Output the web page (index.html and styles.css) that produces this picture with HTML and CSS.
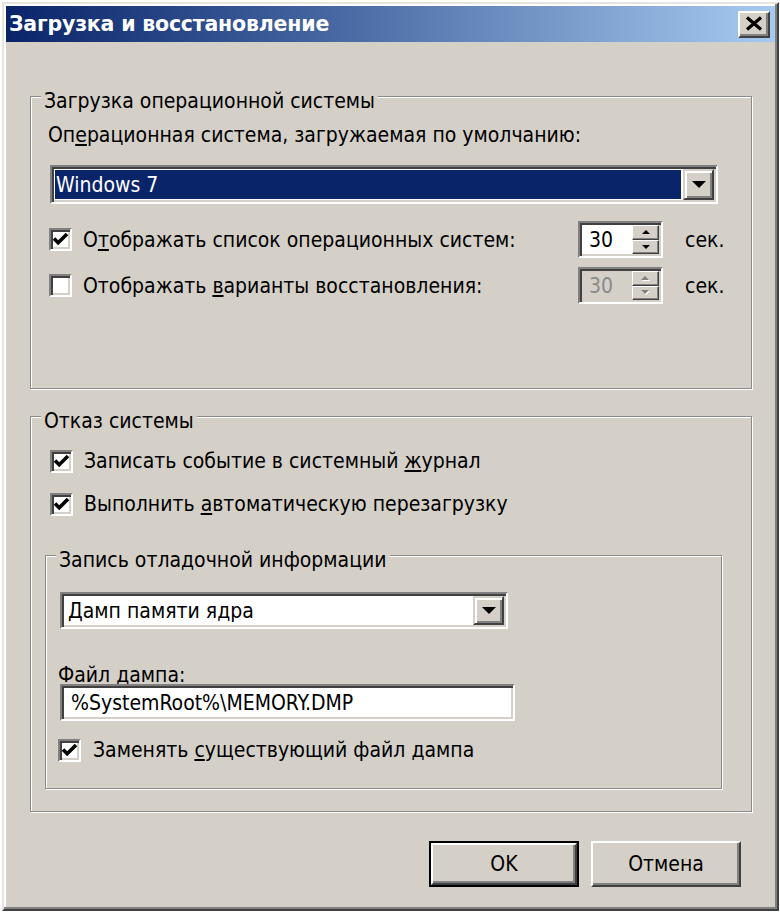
FILE: index.html
```html
<!DOCTYPE html>
<html lang="ru">
<head>
<meta charset="utf-8">
<title>Загрузка и восстановление</title>
<link rel="stylesheet" href="styles.css">
</head>
<body>
<div class="window">
  <div class="titlebar">
    <span class="title">Загрузка и восстановление</span>
    <span class="close"><svg width="18" height="15" viewBox="0 0 18 15"><path d="M2 1.5 L16 13.5 M16 1.5 L2 13.5" stroke="#000" stroke-width="3.2" fill="none"/></svg></span>
  </div>
  <div class="content">
    <div class="group g1">
      <div class="group-title"><span>Загрузка операционной системы</span></div>
      <div class="label l-os">Оп<u>е</u>рационная система, загружаемая по умолчанию:</div>
      <div class="combo combo-os">
        <div class="combo-field"><span class="sel">Windows 7</span></div>
        <span class="drop-btn"><svg width="14" height="7" viewBox="0 0 14 7"><path d="M0 0 H14 L7 7 Z" fill="#000"/></svg></span>
      </div>
      <div class="timer-row r1">
        <span class="check"><svg width="19" height="19" viewBox="0 0 19 19"><path d="M3 8.5 L7.2 12.8 L16 4" stroke="#000" stroke-width="3.6" fill="none"/></svg></span>
        <span class="row-label">О<u>т</u>ображать список операционных систем:</span>
        <div class="spin">
          <span class="spin-value">30</span>
          <span class="spin-btns">
            <span class="spin-btn"><svg width="8" height="4" viewBox="0 0 8 4"><path d="M4 0 L8 4 H0 Z" fill="#000"/></svg></span>
            <span class="spin-btn"><svg width="8" height="4" viewBox="0 0 8 4"><path d="M0 0 H8 L4 4 Z" fill="#000"/></svg></span>
          </span>
        </div>
        <span class="unit">сек.</span>
      </div>
      <div class="timer-row r2">
        <span class="check"></span>
        <span class="row-label">Отображать <u>в</u>арианты восстановления:</span>
        <div class="spin disabled">
          <span class="spin-value">30</span>
          <span class="spin-btns">
            <span class="spin-btn"><svg width="9" height="5" viewBox="0 0 9 5"><path d="M5 1 L9 5 H1 Z" fill="#fff"/><path d="M4 0 L8 4 H0 Z" fill="#808080"/></svg></span>
            <span class="spin-btn"><svg width="9" height="5" viewBox="0 0 9 5"><path d="M1 1 H9 L5 5 Z" fill="#fff"/><path d="M0 0 H8 L4 4 Z" fill="#808080"/></svg></span>
          </span>
        </div>
        <span class="unit">сек.</span>
      </div>
    </div>

    <div class="group g2">
      <div class="group-title"><span>Отказ системы</span></div>
      <div class="check-row c1">
        <span class="check"><svg width="19" height="19" viewBox="0 0 19 19"><path d="M3 8.5 L7.2 12.8 L16 4" stroke="#000" stroke-width="3.6" fill="none"/></svg></span>
        <span class="row-label">Записать событие в системный <u>ж</u>урнал</span>
      </div>
      <div class="check-row c2">
        <span class="check"><svg width="19" height="19" viewBox="0 0 19 19"><path d="M3 8.5 L7.2 12.8 L16 4" stroke="#000" stroke-width="3.6" fill="none"/></svg></span>
        <span class="row-label">Выполнить <u>а</u>втоматическую перезагрузку</span>
      </div>

      <div class="group g3">
        <div class="group-title"><span>Запись отладочной информации</span></div>
        <div class="combo combo-dump">
          <div class="combo-field"><span class="val">Дамп памяти ядра</span></div>
          <span class="drop-btn"><svg width="14" height="7" viewBox="0 0 14 7"><path d="M0 0 H14 L7 7 Z" fill="#000"/></svg></span>
        </div>
        <div class="label l-file">Файл дампа:</div>
        <div class="textbox">%SystemRoot%\MEMORY.DMP</div>
        <div class="check-row c3">
          <span class="check"><svg width="19" height="19" viewBox="0 0 19 19"><path d="M3 8.5 L7.2 12.8 L16 4" stroke="#000" stroke-width="3.6" fill="none"/></svg></span>
          <span class="row-label">Заменять <u>с</u>уществующий файл дампа</span>
        </div>
      </div>
    </div>

    <div class="buttons">
      <span class="btn default"><span class="btn-face">OK</span></span>
      <span class="btn"><span class="btn-face">Отмена</span></span>
    </div>
  </div>
</div>
</body>
</html>
```

FILE: styles.css
```css
* { box-sizing: border-box; }

html, body {
  margin: 0;
  padding: 0;
}

body {
  width: 780px;
  height: 914px;
  overflow: hidden;
  background: #ffffff;
  font-family: "DejaVu Sans Condensed", "DejaVu Sans", sans-serif;
  font-size: 21px;
  line-height: 24px;
  color: #000;
}

u { text-decoration: underline; text-underline-offset: 2px; }

.window {
  margin: 2px 0 0 2px;
  width: 777px;
  height: 909px;
  background: #d4d0c8;
  border: 2px solid;
  border-color: #e6e4e0 #404040 #404040 #e6e4e0;
  box-shadow: inset -2px -2px 0 #808080, inset 2px 2px 0 #ffffff;
  padding: 2px;
  display: flex;
  flex-direction: column;
}

/* ---------- title bar ---------- */
.titlebar {
  height: 36px;
  flex: none;
  background: linear-gradient(to right, #0a246a 0%, #3a5b98 35%, #a6caf0 100%);
  display: flex;
  align-items: center;
  justify-content: space-between;
  padding: 0 5px 0 3px;
}

.title {
  color: #fff;
  font-family: "DejaVu Sans", sans-serif;
  font-weight: bold;
  font-size: 20.5px;
  letter-spacing: -0.2px;
}

.close {
  width: 32px;
  height: 27px;
  background: #d4d0c8;
  border: 2px solid;
  border-color: #ffffff #404040 #404040 #ffffff;
  box-shadow: inset -2px -2px 0 #808080;
  display: flex;
  align-items: center;
  justify-content: center;
  padding-bottom: 1px;
}

/* ---------- content ---------- */
.content {
  padding: 0 23px 0 24px;
  display: flex;
  flex-direction: column;
}

.group {
  border: 1px solid #8c8a86;
  box-shadow: inset 1px 1px 0 #ffffff, 1px 1px 0 #ffffff;
  display: flex;
  flex-direction: column;
  align-items: flex-start;
}

.group-title {
  margin-top: -8px;
  line-height: 24px;
  white-space: nowrap;
}

.group-title span {
  background: #d4d0c8;
  padding: 0 3px;
}

.g1 {
  margin-top: 54px;
  padding: 0 32px 84px 18px;
}
.g1 .group-title { margin-left: -8px; }

.g2 {
  margin-top: 27px;
  padding: 0 29px 22px 18px;
}
.g2 .group-title { margin-left: -8px; }

.g3 {
  align-self: stretch;
  margin: 39px 0 0 -4px;
  padding: 0 14px 26px 14px;
}
.g3 .group-title { margin-left: -4px; }

.label { white-space: nowrap; }
.l-os { margin: 10px 0 0 -1px; }
.l-file { margin: 37px 0 0 -2px; line-height: 18px; }

/* ---------- sunken controls ---------- */
.combo, .textbox, .spin, .check {
  border: 2px solid;
  border-color: #808080 #ffffff #ffffff #808080;
  box-shadow: inset 2px 2px 0 #404040, inset -2px -2px 0 #d4d0c8;
}

.combo {
  display: flex;
  align-items: stretch;
  padding: 2px;
  background: #fff;
}

.combo-os {
  margin: 18px 0 0 1px;
  width: 668px;
  height: 39px;
}

.combo-dump {
  margin-top: 20px;
  width: 448px;
  height: 37px;
}

.combo-field {
  flex: 1;
  display: flex;
  align-items: center;
}

.combo-os .combo-field {
  border: 1px solid #ffffff;
  margin-right: 1px;
}

.sel {
  flex: 1;
  align-self: stretch;
  display: flex;
  align-items: center;
  background: #0a246a;
  color: #ffffff;
  padding-left: 1px;
}

.val { padding-left: 4px; }

.drop-btn {
  width: 31px;
  flex: none;
  background: #d4d0c8;
  border: 2px solid;
  border-color: #d4d0c8 #404040 #404040 #d4d0c8;
  box-shadow: inset 2px 2px 0 #ffffff, inset -2px -2px 0 #808080;
  display: flex;
  align-items: center;
  justify-content: center;
}

.textbox {
  margin-top: 0;
  width: 455px;
  height: 37px;
  background: #fff;
  padding: 0 0 0 9px;
  display: flex;
  align-items: center;
  white-space: nowrap;
}

/* ---------- checkbox rows ---------- */
.check {
  width: 23px;
  height: 23px;
  flex: none;
  background: #fff;
  display: flex;
  align-items: center;
  justify-content: center;
}

.check svg { display: block; }

.row-label { white-space: nowrap; }

.check-row {
  display: flex;
  align-items: center;
  gap: 11px;
  height: 24px;
}
.c1 { margin: 16px 0 0 1px; }
.c2 { margin: 19px 0 0 1px; }
.c3 { margin: 17px 0 0 -2px; gap: 12px; }

.timer-row {
  display: flex;
  align-items: center;
  align-self: stretch;
  height: 37px;
  margin-right: -6px;
}
.r1 { margin-top: 17px; }
.r2 { margin-top: 9px; }

.timer-row .check { margin: 0 11px 0 0; }
.timer-row .row-label { flex: 1; }

/* ---------- spinner ---------- */
.spin {
  width: 85px;
  height: 37px;
  background: #fff;
  display: flex;
  align-items: stretch;
  padding: 2px 2px 2px 2px;
}

.spin-value {
  flex: 1;
  display: flex;
  align-items: center;
  padding-left: 7px;
}

.spin-btns {
  width: 27px;
  display: flex;
  flex-direction: column;
}

.spin-btn {
  flex: 1;
  background: #d4d0c8;
  border: 1px solid;
  border-color: #ffffff #404040 #404040 #ffffff;
  box-shadow: inset -1px -1px 0 #808080;
  display: flex;
  align-items: center;
  justify-content: center;
}

.spin.disabled { background: #d4d0c8; }
.spin.disabled .spin-value { color: #8a8a8a; }

.unit {
  width: 40px;
  margin-left: 22px;
}

/* ---------- buttons ---------- */
.buttons {
  margin-top: 29px;
  display: flex;
  justify-content: flex-end;
  gap: 12px;
  padding-right: 11px;
}

.btn {
  width: 150px;
  height: 46px;
  display: flex;
}

.btn-face {
  flex: 1;
  background: #d4d0c8;
  border: 2px solid;
  border-color: #ffffff #404040 #404040 #ffffff;
  box-shadow: inset -2px -2px 0 #808080;
  display: flex;
  align-items: center;
  justify-content: center;
}

.btn.default {
  border: 2px solid #000;
}
```
